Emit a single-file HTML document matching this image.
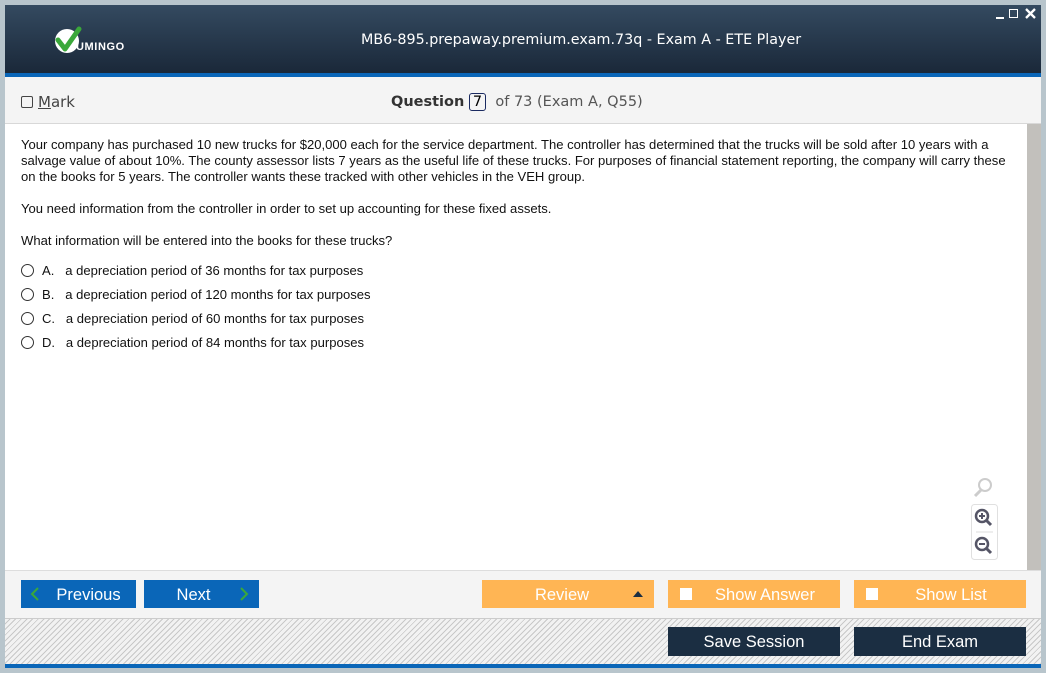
<!DOCTYPE html>
<html><head><meta charset="utf-8"><style>
*{margin:0;padding:0;box-sizing:border-box}
body{width:1046px;height:673px;background:#b8c5cc;position:relative;overflow:hidden;font-family:"Liberation Sans",sans-serif}
.hdr{position:absolute;left:5px;top:5px;width:1036px;height:68px;background:linear-gradient(#344a60,#1a2839)}
.blue{position:absolute;left:5px;top:73px;width:1036px;height:4px;background:#0a66b8}
.title{position:absolute;left:356px;top:27px;color:#fff;font-family:"DejaVu Sans",sans-serif;font-size:14.3px;white-space:nowrap}
.markbar{position:absolute;left:5px;top:77px;width:1036px;height:47px;background:#f4f4f4;border-bottom:1px solid #d8d8d8}
.content{position:absolute;left:5px;top:124px;width:1022px;height:446px;background:#fff;font-size:13.05px;color:#111;padding:13px 16px}
.scroll{position:absolute;left:1027px;top:124px;width:14px;height:446px;background:#c2c0bc}
.content p{line-height:16px;margin-bottom:16px}
.opt{height:24px;line-height:16px;display:flex;align-items:flex-start}
.rad{width:13px;height:13px;border:1px solid #333;border-radius:50%;margin-right:8px;margin-top:1px}
.bar{position:absolute;left:5px;top:570px;width:1036px;height:48px;background:#f4f4f4;border-top:1px solid #ddd}
.hatch{position:absolute;left:5px;top:618px;width:1036px;height:46px;border-top:1px solid #ccc;background:repeating-linear-gradient(135deg,#f2f2f2 0 3px,#c8c8c8 3px 4px)}
.bblue{position:absolute;left:5px;top:664px;width:1036px;height:4px;background:#0a66b8}
.btn{position:absolute;height:28px;color:#fff;font-size:16.5px;line-height:30px;text-align:center;font-family:"Liberation Sans",sans-serif}
.nb{background:#0a66b8}
.ob{background:#ffb554}
.db{background:#1b2e42}
.cb{position:absolute;top:8px;left:12px;width:12px;height:12px;background:#fff}
</style></head><body>
<div class="hdr">
<svg style="position:absolute;left:45px;top:19px" width="90" height="32" viewBox="0 0 90 32">
<circle cx="17" cy="17" r="12" fill="#fff"/>
<path d="M8 16 L15 25 L29 5" stroke="#3aa83a" stroke-width="5" fill="none" stroke-linecap="round" stroke-linejoin="round"/>
<text x="26" y="26" fill="#fff" font-family="Liberation Sans" font-weight="bold" font-size="11" letter-spacing="0.6">UMINGO</text>
</svg>
<div class="title">MB6-895.prepaway.premium.exam.73q - Exam A - ETE Player</div>
<div style="position:absolute;right:37px;top:12px;width:8px;height:2px;background:#fff"></div>
<div style="position:absolute;right:23px;top:4px;width:9px;height:9px;border:1.8px solid #fff"></div>
<svg style="position:absolute;right:5px;top:3px" width="11" height="11"><path d="M1 1L10 10M10 1L1 10" stroke="#fff" stroke-width="2.3"/></svg>
</div>
<div class="blue"></div>
<div class="markbar">
<div style="position:absolute;left:16px;top:19px;width:12px;height:12px;border:1.3px solid #444;border-radius:2px"></div>
<div style="position:absolute;left:33px;top:16px;color:#444;font-family:'DejaVu Sans',sans-serif;font-size:15px"><u>M</u>ark</div>
<div style="position:absolute;left:386px;top:16px;color:#555;font-family:'DejaVu Sans',sans-serif;font-size:14.5px"><b style="color:#333">Question</b> <span style="display:inline-block;border:1px solid #1a2a60;border-radius:3px;padding:0 3px;color:#000">7</span>&nbsp; of 73 (Exam A, Q55)</div>
</div>
<div class="content">
<p>Your company has purchased 10 new trucks for $20,000 each for the service department. The controller has determined that the trucks will be sold after 10 years with a salvage value of about 10%. The county assessor lists 7 years as the useful life of these trucks. For purposes of financial statement reporting, the company will carry these on the books for 5 years. The controller wants these tracked with other vehicles in the VEH group.</p>
<p>You need information from the controller in order to set up accounting for these fixed assets.</p>
<p style="margin-bottom:14px">What information will be entered into the books for these trucks?</p>
<div class="opt"><span class="rad"></span>A.&nbsp;&nbsp;&nbsp;a depreciation period of 36 months for tax purposes</div>
<div class="opt"><span class="rad"></span>B.&nbsp;&nbsp;&nbsp;a depreciation period of 120 months for tax purposes</div>
<div class="opt"><span class="rad"></span>C.&nbsp;&nbsp;&nbsp;a depreciation period of 60 months for tax purposes</div>
<div class="opt"><span class="rad"></span>D.&nbsp;&nbsp;&nbsp;a depreciation period of 84 months for tax purposes</div>
<svg style="position:absolute;left:966px;top:352px" width="30" height="86" viewBox="0 0 30 86">
<circle cx="14" cy="9" r="6" fill="none" stroke="#ccc" stroke-width="2"/><path d="M10 14 L4 20" stroke="#ccc" stroke-width="3"/>
<rect x="0.5" y="28.5" width="26" height="55" rx="3" fill="#fff" stroke="#e0e0e0"/>
<line x1="5" y1="56" x2="22" y2="56" stroke="#ddd"/>
<circle cx="11" cy="40" r="6" fill="none" stroke="#556" stroke-width="2.5"/><path d="M8 40h6M11 37v6" stroke="#556" stroke-width="2"/><path d="M15 44 L20 49" stroke="#556" stroke-width="3"/>
<circle cx="11" cy="68" r="6" fill="none" stroke="#556" stroke-width="2.5"/><path d="M8 68h6" stroke="#556" stroke-width="2"/><path d="M15 72 L20 77" stroke="#556" stroke-width="3"/>
</svg>
</div>
<div class="scroll"></div>
<div class="bar"></div>
<div class="btn nb" style="left:21px;top:580px;width:115px;padding-left:20px">Previous<svg style="position:absolute;left:9px;top:7px" width="10" height="14"><path d="M8 1L2 7L8 13" stroke="#3aa83a" stroke-width="2" fill="none"/></svg></div>
<div class="btn nb" style="left:144px;top:580px;width:115px;padding-right:16px">Next<svg style="position:absolute;right:10px;top:7px" width="10" height="14"><path d="M2 1L8 7L2 13" stroke="#3aa83a" stroke-width="2" fill="none"/></svg></div>
<div class="btn ob" style="left:482px;top:580px;width:172px;padding-right:12px">Review<span style="position:absolute;right:11px;top:11px;width:0;height:0;border-left:5px solid transparent;border-right:5px solid transparent;border-bottom:6px solid #1b2e42"></span></div>
<div class="btn ob" style="left:668px;top:580px;width:172px;padding-left:22px"><span class="cb"></span>Show Answer</div>
<div class="btn ob" style="left:854px;top:580px;width:172px;padding-left:22px"><span class="cb"></span>Show List</div>
<div class="hatch"></div>
<div class="btn db" style="left:668px;top:627px;width:172px;height:29px">Save Session</div>
<div class="btn db" style="left:854px;top:627px;width:172px;height:29px">End Exam</div>
<div class="bblue"></div>
</body></html>
